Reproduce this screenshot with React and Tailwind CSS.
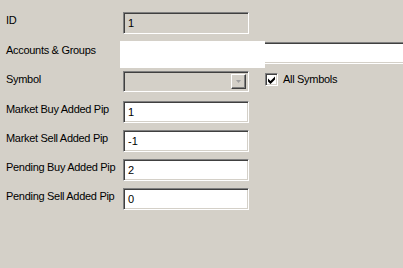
import React from "react";

const sunken =
  "border border-t-[#808080] border-l-[#808080] border-b-white border-r-white shadow-[inset_1px_1px_0_#404040,inset_-1px_-1px_0_#d4d0c8]";

function Label({ children }) {
  return (
    <div className="w-[123px] shrink-0 pl-[6px] pt-[2px] leading-[13px] whitespace-nowrap tracking-[-0.3px]">
      {children}
    </div>
  );
}

function TextBox({ value, disabled }) {
  return (
    <div
      className={`${sunken} w-[126px] shrink-0 h-[22px] flex items-center pl-[4px] ${
        disabled ? "bg-[#d4d0c8]" : "bg-white"
      }`}
    >
      {value}
    </div>
  );
}

export default function App() {
  return (
    <div
      className="relative w-[403px] h-[268px] overflow-hidden bg-[#d4d0c8] text-black text-[11px]"
      style={{ fontFamily: '"Liberation Sans", Arial, sans-serif' }}
    >
      <div className="flex flex-col pt-[12px]">
        <div className="flex">
          <Label>ID</Label>
          <TextBox value="1" disabled />
        </div>
        <div className="flex mt-[8px]">
          <Label>Accounts &amp; Groups</Label>
          <div className={`${sunken} h-[22px] w-[300px] shrink-0 bg-white`} />
        </div>
        <div className="flex items-start mt-[7px]">
          <Label>Symbol</Label>
          <div className={`${sunken} w-[126px] shrink-0 h-[21px] bg-[#d4d0c8] flex justify-end items-stretch p-[2px]`}>
            <div className="w-[15px] border border-t-white border-l-white border-b-[#404040] border-r-[#404040] shadow-[inset_-1px_-1px_0_#808080] bg-[#d4d0c8] flex items-center justify-center">
              <svg width="7" height="5" viewBox="0 0 7 5">
                <polygon points="1,1 6,1 3.5,4" fill="#a0a0a0" />
              </svg>
            </div>
          </div>
          <div className="flex items-center ml-[16px] mt-[2px] gap-[5px]">
            <div className={`${sunken} w-[13px] h-[13px] bg-white flex items-center justify-center`}>
              <svg width="9" height="9" viewBox="0 0 9 9">
                <path d="M1 3.5 L3.5 6 L8 1.5 L8 4.5 L3.5 9 L1 6.5 Z" fill="#000" />
              </svg>
            </div>
            <span className="leading-[13px] tracking-[-0.3px]">All Symbols</span>
          </div>
        </div>
        <div className="flex mt-[9px]">
          <Label>Market Buy Added Pip</Label>
          <TextBox value="1" />
        </div>
        <div className="flex mt-[7px]">
          <Label>Market Sell Added Pip</Label>
          <TextBox value="-1" />
        </div>
        <div className="flex mt-[7px]">
          <Label>Pending Buy Added Pip</Label>
          <TextBox value="2" />
        </div>
        <div className="flex mt-[7px]">
          <Label>Pending Sell Added Pip</Label>
          <TextBox value="0" />
        </div>
      </div>
      <div className="absolute left-[120px] top-[41px] w-[145px] h-[27px] bg-white" />
    </div>
  );
}
